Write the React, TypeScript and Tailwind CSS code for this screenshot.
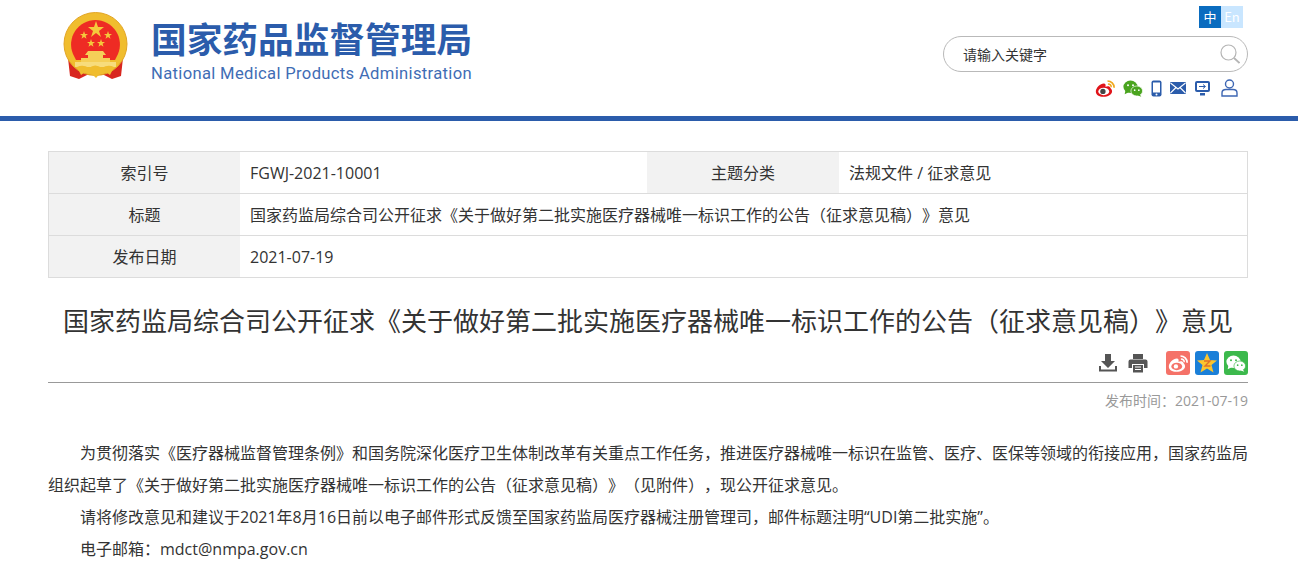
const cjk = "font-['Open_Sans','Noto_Sans_CJK_SC',sans-serif] [text-spacing-trim:space-all]";

function Emblem() {
  return (
    <svg width="66" height="70" viewBox="0 0 66 70">
      <path d="M5 46 L15 54 L50 54 L60 46 L58 64 L49 67 L41 63 L24 63 L16 67 L7 64Z" fill="#d8261f" />
      <circle cx="32.5" cy="32" r="31.5" fill="#f0bd2e" />
      <circle cx="32.5" cy="32" r="31.5" fill="none" stroke="#e2a526" strokeWidth="1" />
      <path d="M32.5 8 A24.5 24.5 0 0 1 55 42 L52 48 H13 L10 42 A24.5 24.5 0 0 1 32.5 8Z" fill="#ee2b24" />
      <polygon points="33,9 35,15 41,15 36,19 38,25 33,21 28,25 30,19 25,15 31,15" fill="#f5c93c" />
      <polygon points="21,19 22,22 25,22 22.6,23.8 23.5,26.8 21,25 18.5,26.8 19.4,23.8 17,22 20,22" fill="#f5c93c" />
      <polygon points="45,19 46,22 49,22 46.6,23.8 47.5,26.8 45,25 42.5,26.8 43.4,23.8 41,22 44,22" fill="#f5c93c" />
      <polygon points="28,27 29,30 32,30 29.6,31.8 30.5,34.8 28,33 25.5,34.8 26.4,31.8 24,30 27,30" fill="#f5c93c" />
      <polygon points="38,27 39,30 42,30 39.6,31.8 40.5,34.8 38,33 35.5,34.8 36.4,31.8 34,30 37,30" fill="#f5c93c" />
      <path d="M25 39 H40 L43 43 H40 V46 H47 V50 H18 V46 H25 V43 H22Z" fill="#f5cf58" />
      <rect x="12" y="50" width="41" height="5" fill="#f7dc7c" />
      <path d="M14 55 Q20 52 26 56 Q32 51 39 56 Q45 52 51 55 L47 63 L40 58 L33 66 L25 58 L18 63Z" fill="#f0bd2e" />
    </svg>
  );
}

function Weibo({ size = 22 }: { size?: number }) {
  return (
    <svg width={size} height={size * 0.85} viewBox="0 0 24 20">
      <path d="M1 13.5 C1 9 7 3.5 11 4 C13 4.4 13 6.5 12.5 8 C15 7 18 7 18.5 9.5 C19 10.5 20.5 11 20.5 13.5 C20.5 17 15.5 20 10 20 C5 20 1 17.5 1 13.5Z" fill="#e0141a" />
      <ellipse cx="10.5" cy="13.5" rx="6.5" ry="4.5" fill="#fff" />
      <circle cx="9.5" cy="13.5" r="3.2" fill="#444" />
      <path d="M15 1 A8 8 0 0 1 23 9" fill="none" stroke="#f0a81e" strokeWidth="2" />
      <path d="M15.5 4.5 A4 4 0 0 1 19.5 8.5" fill="none" stroke="#f0a81e" strokeWidth="1.8" />
    </svg>
  );
}

function Wechat({ size = 20, color = "#4aa41f", eye = "#fff" }: { size?: number; color?: string; eye?: string }) {
  return (
    <svg width={size} height={size * 0.85} viewBox="0 0 24 20">
      <ellipse cx="9" cy="8" rx="8.5" ry="7.5" fill={color} />
      <path d="M3 12 L2 17 L8 14Z" fill={color} />
      <ellipse cx="16.5" cy="13" rx="7" ry="6" fill={color} stroke={eye} strokeWidth="0.8" />
      <path d="M20 17 L22 20 L17 18Z" fill={color} />
      <circle cx="6" cy="6" r="1.2" fill={eye} />
      <circle cx="12" cy="6" r="1.2" fill={eye} />
      <circle cx="14" cy="12" r="1" fill={eye} />
      <circle cx="19" cy="12" r="1" fill={eye} />
    </svg>
  );
}

function TopIcons() {
  return (
    <div className="mt-[4px] flex h-[24px] items-center justify-end gap-[8px] pr-[10px] text-[#2b5cab]">
      <Weibo size={20} />
      <Wechat size={20} />
      <svg width="11" height="17" viewBox="0 0 11 17">
        <rect x="0.5" y="0.5" width="10" height="16" rx="2" fill="#2b5cab" />
        <rect x="2" y="2.5" width="7" height="10" fill="#fff" />
        <circle cx="5.5" cy="14.5" r="1" fill="#fff" />
      </svg>
      <svg width="16" height="12" viewBox="0 0 16 12">
        <rect width="16" height="12" rx="1" fill="#2b5cab" />
        <path d="M0.5 1 L8 7 L15.5 1 M0.5 11 L6 5.5 M15.5 11 L10 5.5" fill="none" stroke="#fff" strokeWidth="1.1" />
      </svg>
      <svg width="15" height="15" viewBox="0 0 15 15" className="ml-[1px]">
        <rect x="0" y="0" width="15" height="11" rx="2" fill="#2b5cab" />
        <rect x="2" y="2" width="11" height="7" fill="#fff" />
        <path d="M4 5.5 H10 M8 3.5 L10.5 5.5 L8 7.5" fill="none" stroke="#2b5cab" strokeWidth="1" />
        <rect x="5" y="12" width="5" height="2.5" fill="#2b5cab" />
      </svg>
      <svg width="17" height="18" viewBox="0 0 17 18" className="ml-[3px]">
        <circle cx="8.5" cy="5" r="4" fill="none" stroke="#3d66b3" strokeWidth="1.4" />
        <path d="M1 17 V14 Q1 10.5 5 10.5 H12 Q16 10.5 16 14 V17Z" fill="none" stroke="#3d66b3" strokeWidth="1.4" />
      </svg>
    </div>
  );
}

function Header() {
  return (
    <header className="flex h-[121px] justify-between border-b-[5px] border-[#2b5cab] pl-[63px] pr-[50px]">
      <div className="flex">
        <div className="mt-[12px]">
          <Emblem />
        </div>
        <div className="ml-[22px] mt-[15px]">
          <div className="font-['Noto_Sans_CJK_SC',sans-serif] text-[35.7px] leading-[46px] font-bold text-[#2b5cab]">国家药品监督管理局</div>
          <div className="mt-[2px] font-['Roboto',sans-serif] text-[16.6px] leading-[22px] tracking-[0.33px] text-[#3f6db5]">
            National Medical Products Administration
          </div>
        </div>
      </div>
      <div className="w-[305px]">
        <div className="mt-[6px] flex justify-end pr-[5px] font-['Noto_Sans_CJK_SC',sans-serif] text-[13px] leading-[22px]">
          <span className="w-[22px] bg-[#0a6cbf] text-center text-white">中</span>
          <span className="w-[22px] bg-[#c9e6ff] text-center text-white">En</span>
        </div>
        <div className="mt-[8px] flex h-[36px] items-center justify-between rounded-[18px] border border-[#b9b9b9] pl-[19px] pr-[7px]">
          <span className="text-[14px] text-[#333]">请输入关键字</span>
          <svg width="20" height="20" viewBox="0 0 20 20" fill="none" className="text-[#b5b5b5]">
            <circle cx="8.5" cy="8.5" r="7.5" stroke="currentColor" strokeWidth="1.2" />
            <path d="M14 14 L19.5 19" stroke="currentColor" strokeWidth="1.8" />
          </svg>
        </div>
        <TopIcons />
      </div>
    </header>
  );
}

const labelCell = "flex items-center justify-center bg-[#f2f2f2]";
const valueCell = "flex items-center px-[10px]";

function InfoTable() {
  return (
    <div className="mt-[30px] border border-[#dcdcdc] text-[16px] text-[#333]">
      <div className="grid h-[42px] grid-cols-[191px_407px_192px_1fr] border-b border-[#dcdcdc]">
        <div className={labelCell}>索引号</div>
        <div className={valueCell}>FGWJ-2021-10001</div>
        <div className={labelCell}>主题分类</div>
        <div className={valueCell}>法规文件 / 征求意见</div>
      </div>
      <div className="grid h-[42px] grid-cols-[191px_1fr] border-b border-[#dcdcdc]">
        <div className={labelCell}>标题</div>
        <div className={valueCell}>国家药监局综合司公开征求《关于做好第二批实施医疗器械唯一标识工作的公告（征求意见稿）》意见</div>
      </div>
      <div className="grid h-[41px] grid-cols-[191px_1fr]">
        <div className={labelCell}>发布日期</div>
        <div className={valueCell}>2021-07-19</div>
      </div>
    </div>
  );
}

function ShareBar() {
  return (
    <div className="mt-[9px] flex h-[32px] items-start justify-end border-b border-[#999]">
      <div className="flex items-center">
        <svg width="20" height="20" viewBox="0 0 20 20" fill="#555">
          <path d="M7 1 H13 V8 H17 L10 15 L3 8 H7Z" />
          <path d="M1 13 V18.5 H19 V13 H17 V16.5 H3 V13Z" />
        </svg>
        <svg width="20" height="20" viewBox="0 0 20 20" className="ml-[10px]">
          <path d="M5 1 H15 V6 H5Z" fill="#555" />
          <path d="M2.5 6.5 H17.5 Q19.5 6.5 19.5 8.5 V15 H16 V11 H4 V15 H0.5 V8.5 Q0.5 6.5 2.5 6.5Z" fill="#555" />
          <path d="M5 12 H15 V19.5 H5Z" fill="#555" />
          <path d="M7 14 H13 M7 16.5 H13" stroke="#fff" strokeWidth="1.2" />
        </svg>
        <div className="ml-[18px] flex h-[24px] w-[24px] items-center justify-center rounded-[3px] bg-[#f57268]">
          <svg width="20" height="17" viewBox="0 0 24 20">
            <path d="M1 13.5 C1 9 7 3.5 11 4 C13 4.4 13 6.5 12.5 8 C15 7 18 7 18.5 9.5 C19 10.5 20.5 11 20.5 13.5 C20.5 17 15.5 20 10 20 C5 20 1 17.5 1 13.5Z" fill="#fff" />
            <ellipse cx="10.5" cy="13.5" rx="6.5" ry="4.5" fill="#f57268" />
            <circle cx="9.5" cy="13.5" r="2.6" fill="#fff" />
            <path d="M15 1 A8 8 0 0 1 23 9" fill="none" stroke="#fff" strokeWidth="2" />
            <path d="M15.5 4.5 A4 4 0 0 1 19.5 8.5" fill="none" stroke="#fff" strokeWidth="1.8" />
          </svg>
        </div>
        <div className="ml-[5px] flex h-[24px] w-[24px] items-center justify-center rounded-[3px] bg-[#1a7fd8]">
          <svg width="22" height="22" viewBox="0 0 22 22">
            <polygon points="11,1 14,8 21,8.5 15.5,13 17.5,20.5 11,16.5 4.5,20.5 6.5,13 1,8.5 8,8" fill="#fbc52d" />
            <path d="M8 9 H14 L9 14 H14.5" fill="none" stroke="#e0702a" strokeWidth="1.4" />
          </svg>
        </div>
        <div className="ml-[5px] flex h-[24px] w-[24px] items-center justify-center rounded-[3px] bg-[#3cb94c]">
          <Wechat size={20} color="#fff" eye="#3cb94c" />
        </div>
      </div>
    </div>
  );
}

export default function App() {
  return (
    <div className={`${cjk} h-[563px] overflow-hidden bg-white`}>
      <Header />
      <main className="mx-[48px] w-[1200px]">
        <InfoTable />
        <h1 className="mt-[22px] h-[42px] text-center text-[26px] leading-[42px] font-normal whitespace-nowrap text-[#333]">
          国家药监局综合司公开征求《关于做好第二批实施医疗器械唯一标识工作的公告（征求意见稿）》意见
        </h1>
        <ShareBar />
        <div className="mt-[7px] text-right text-[14px] leading-[22px] text-[#999]">发布时间：2021-07-19</div>
        <article className="mt-[25px] text-[16px] leading-[32px] text-[#333]">
          <p className="indent-[32px] text-justify">
            为贯彻落实《医疗器械监督管理条例》和国务院深化医疗卫生体制改革有关重点工作任务，推进医疗器械唯一标识在监管、医疗、医保等领域的衔接应用，国家药监局组织起草了《关于做好第二批实施医疗器械唯一标识工作的公告（征求意见稿）》（见附件），现公开征求意见。
          </p>
          <p className="indent-[32px]">请将修改意见和建议于2021年8月16日前以电子邮件形式反馈至国家药监局医疗器械注册管理司，邮件标题注明“UDI第二批实施”。</p>
          <p className="indent-[32px]">电子邮箱：mdct@nmpa.gov.cn</p>
        </article>
      </main>
    </div>
  );
}
